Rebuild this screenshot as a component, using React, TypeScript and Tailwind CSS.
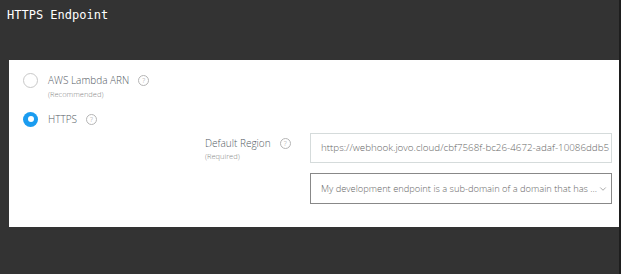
import { ChevronDown } from "lucide-react";

const Help = () => (
  <span className="inline-flex h-[11px] w-[11px] items-center justify-center rounded-full border border-[#b5b5b5] text-[7px] leading-none text-[#9a9a9a]">
    ?
  </span>
);

const Radio = ({ checked }: { checked?: boolean }) =>
  checked ? (
    <span className="flex h-[15px] w-[15px] shrink-0 items-center justify-center rounded-full bg-[#1a9cf0]">
      <span className="h-[6px] w-[6px] rounded-full bg-white" />
    </span>
  ) : (
    <span className="h-[15px] w-[15px] shrink-0 rounded-full border border-[#c8c8c8] bg-white" />
  );

export default function App() {
  return (
    <div className="flex h-[274px] w-[621px] overflow-hidden bg-[#333333] font-['Open_Sans',sans-serif] font-light">
      <div className="w-[619px]">
        <div className="px-[7px] pt-[6px] font-['DejaVu_Sans_Mono',monospace] text-[12px] font-normal leading-[18px] text-white">
          HTTPS Endpoint
        </div>
        <div className="ml-[9px] mt-[36px] h-[167px] w-[610px] bg-white pt-[13px]">
          <div className="flex items-start pl-[14px]">
            <Radio />
            <div className="ml-[10px] -mt-[1px]">
              <div className="flex items-center gap-[9px] text-[10px] leading-[16px] text-[#545b64]">
                AWS Lambda ARN <Help />
              </div>
              <div className="text-[7.5px] leading-[12px] text-[#888]">(Recommended)</div>
            </div>
          </div>
          <div className="mt-[11px] flex items-center pl-[14px]">
            <Radio checked />
            <div className="ml-[10px] flex items-center gap-[9px] text-[10px] leading-[16px] text-[#545b64]">
              HTTPS <Help />
            </div>
          </div>
          <div className="mt-[6px] flex pl-[196px]">
            <div className="w-[105px] pt-[2px]">
              <div className="flex items-center gap-[9px] text-[10px] leading-[16px] text-[#545b64]">
                Default Region <Help />
              </div>
              <div className="text-[7.5px] leading-[11px] text-[#888]">(Required)</div>
            </div>
            <div className="flex w-[302px] flex-col gap-[10px]">
              <div className="flex h-[30px] items-center overflow-hidden whitespace-nowrap border border-[#d5dbdb] pl-[10px] text-[9.8px] text-[#666]">
                https://webhook.jovo.cloud/cbf7568f-bc26-4672-adaf-10086ddb5
              </div>
              <div className="flex h-[31px] items-center border border-[#888] pl-[10px] pr-[3px] text-[9.3px] text-[#666]">
                <span className="whitespace-nowrap">
                  My development endpoint is a sub-domain of a domain that has ...
                </span>
                <ChevronDown size={10} strokeWidth={1.5} className="ml-[1px] shrink-0 text-[#777]" />
              </div>
            </div>
          </div>
        </div>
      </div>
      <div className="w-[2px] bg-[#1e1e1e]" />
    </div>
  );
}
